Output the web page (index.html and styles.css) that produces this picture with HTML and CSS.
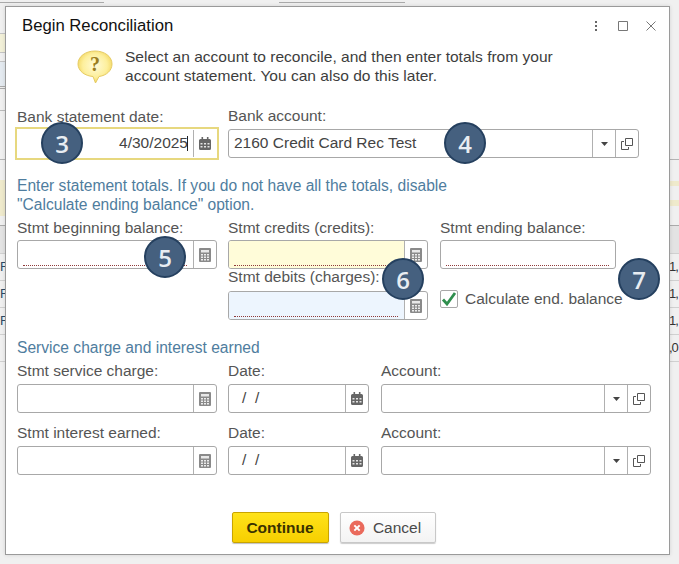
FILE: index.html
```html
<!DOCTYPE html>
<html lang="en">
<head>
<meta charset="utf-8">
<title>Begin Reconciliation</title>
<link rel="stylesheet" href="styles.css">
</head>
<body>
<svg class="sprite" width="0" height="0" aria-hidden="true">
  <symbol id="cal" viewBox="0 0 12 13"><path d="M1.500 2h9A1.500 1.500 0 0 1 12 3.500v8A1.500 1.500 0 0 1 10.500 13h-9A1.500 1.500 0 0 1 0 11.500v-8A1.500 1.500 0 0 1 1.500 2z" fill="#666"/><rect x="2.500" y="0" width="1.600" height="3" fill="#666"/><rect x="7.900" y="0" width="1.600" height="3" fill="#666"/><path d="M1.500 6h2v1.500h-2zM5 6h2v1.500H5zM8.500 6h2v1.500h-2zM1.500 9h2v1.500h-2zM5 9h2v1.500H5zM8.500 9h2v1.500h-2z" fill="#e4e4e4"/></symbol>
  <symbol id="calc" viewBox="0 0 12 14"><rect width="12" height="14" rx="1" fill="#8a8a8a"/><rect x="2" y="2" width="8" height="2.500" fill="#e8e8e8"/><path d="M2 6h2v1.500H2zM5 6h2v1.500H5zM8 6h2v1.500H8zM2 8.500h2V10H2zM5 8.500h2V10H5zM8 8.500h2V10H8zM2 11h2v1.500H2zM5 11h2v1.500H5zM8 11h2v1.500H8z" fill="#ececec"/></symbol>
  <symbol id="copy" viewBox="0 0 12 12"><path d="M4.500.5h7v7h-7z" fill="none" stroke="#555"/><path d="M3 3.500H.5v8h7V9" fill="none" stroke="#555"/></symbol>
  <symbol id="caret" viewBox="0 0 7 4"><path d="M0 0h7L3.500 4z" fill="#444"/></symbol>
</svg>

<div class="backdrop">
  <div class="bg-top"><span class="bg-tl"></span><span class="bg-tr"></span></div>
  <div class="bg-upper"></div>
  <div class="bg-lower"></div>
  <div class="bg-head"></div>
  <div class="bg-row"><span>F</span><span>1,</span></div>
  <div class="bg-row"><span>F</span><span>1,</span></div>
  <div class="bg-row"><span>F</span><span>1,</span></div>
  <div class="bg-row"><span></span><span class="bg-tail">,0</span></div>
</div>

<section class="dialog">
  <header class="head">
    <h1 class="title">Begin Reconciliation</h1>
    <div class="win-tools">
      <svg class="tool tool-dots" width="4" height="10" viewBox="0 0 4 10"><path d="M1 0h2v2H1zM1 4h2v2H1zM1 8h2v2H1z" fill="#666"/></svg>
      <svg class="tool" width="10" height="10" viewBox="0 0 10 10"><path d="M.5.5h9v9h-9z" fill="none" stroke="#777"/></svg>
      <svg class="tool" width="10" height="10" viewBox="0 0 10 10"><path d="M.5.500l9 9M9.500.500l-9 9" fill="none" stroke="#777"/></svg>
    </div>
  </header>

  <div class="intro">
    <svg class="bubble" width="36" height="34" viewBox="0 0 36 34">
      <defs>
        <radialGradient id="bub" cx="50%" cy="45%" r="60%">
          <stop offset="0" stop-color="#fffbd8"/>
          <stop offset=".6" stop-color="#fdef9c"/>
          <stop offset="1" stop-color="#efcf4e"/>
        </radialGradient>
      </defs>
      <path d="M18 1c9.500 0 17 5.500 17 13 0 6.500-5.500 11.500-13 12.500l-3.500 6.500-2.500-6.500C8 26 1 21 1 14 1 6.500 8.500 1 18 1z" fill="url(#bub)" stroke="#e6cb62"/>
      <text x="18" y="21" class="bubble-q">?</text>
    </svg>
    <p class="intro-text">Select an account to reconcile, and then enter totals from your<br>account statement. You can also do this later.</p>
  </div>

  <div class="row-top">
    <div class="col-a">
      <label class="lbl">Bank statement date:</label>
      <div class="field field-focus">
        <div class="input input-date">4/30/2025<i class="caret-bar"></i></div>
        <div class="cell"><svg class="ico-cal"><use href="#cal"/></svg></div>
      </div>
    </div>
    <div class="col-bank">
      <label class="lbl lbl-up">Bank account:</label>
      <div class="field">
        <div class="input input-text">2160 Credit Card Rec Test</div>
        <div class="cell"><svg class="ico-caret"><use href="#caret"/></svg></div>
        <div class="cell"><svg class="ico-copy"><use href="#copy"/></svg></div>
      </div>
    </div>
  </div>

  <p class="section-note">Enter statement totals. If you do not have all the totals, disable<br>"Calculate ending balance" option.</p>

  <div class="row-totals">
    <div class="col-a">
      <label class="lbl">Stmt beginning balance:</label>
      <div class="field">
        <div class="input input-dotted"></div>
        <div class="cell"><svg class="ico-calc"><use href="#calc"/></svg></div>
      </div>
    </div>
    <div class="col-a">
      <label class="lbl">Stmt credits (credits):</label>
      <div class="field">
        <div class="input input-dotted tint-y"></div>
        <div class="cell"><svg class="ico-calc"><use href="#calc"/></svg></div>
      </div>
      <label class="lbl lbl-wide">Stmt debits (charges):</label>
      <div class="field">
        <div class="input input-dotted tint-b"></div>
        <div class="cell"><svg class="ico-calc"><use href="#calc"/></svg></div>
      </div>
    </div>
    <div class="col-end">
      <label class="lbl">Stmt ending balance:</label>
      <div class="field">
        <div class="input input-dotted"></div>
      </div>
      <div class="check-row">
        <span class="check"><svg width="16" height="14" viewBox="0 0 16 14"><path d="M2 7.500l4 4.500 8-11" fill="none" stroke="#2f8f4e" stroke-width="2.800"/></svg></span>
        <span class="check-label">Calculate end. balance</span>
      </div>
    </div>
  </div>

  <h2 class="section-head">Service charge and interest earned</h2>

  <div class="grid-service">
    <div>
      <label class="lbl">Stmt service charge:</label>
      <div class="field">
        <div class="input"></div>
        <div class="cell"><svg class="ico-calc"><use href="#calc"/></svg></div>
      </div>
    </div>
    <div>
      <label class="lbl">Date:</label>
      <div class="field">
        <div class="input input-slashes">/&nbsp;&nbsp;/</div>
        <div class="cell"><svg class="ico-cal"><use href="#cal"/></svg></div>
      </div>
    </div>
    <div>
      <label class="lbl">Account:</label>
      <div class="field">
        <div class="input"></div>
        <div class="cell"><svg class="ico-caret"><use href="#caret"/></svg></div>
        <div class="cell"><svg class="ico-copy"><use href="#copy"/></svg></div>
      </div>
    </div>
    <div>
      <label class="lbl">Stmt interest earned:</label>
      <div class="field">
        <div class="input"></div>
        <div class="cell"><svg class="ico-calc"><use href="#calc"/></svg></div>
      </div>
    </div>
    <div>
      <label class="lbl">Date:</label>
      <div class="field">
        <div class="input input-slashes">/&nbsp;&nbsp;/</div>
        <div class="cell"><svg class="ico-cal"><use href="#cal"/></svg></div>
      </div>
    </div>
    <div>
      <label class="lbl">Account:</label>
      <div class="field">
        <div class="input"></div>
        <div class="cell"><svg class="ico-caret"><use href="#caret"/></svg></div>
        <div class="cell"><svg class="ico-copy"><use href="#copy"/></svg></div>
      </div>
    </div>
  </div>

  <div class="actions">
    <button class="btn btn-primary" type="button">Continue</button>
    <button class="btn btn-cancel" type="button">
      <svg width="16" height="16" viewBox="0 0 18 18"><circle cx="9" cy="9" r="8.500" fill="#ea6a5c"/><path d="M6 6l6 6M12 6l-6 6" stroke="#fff" stroke-width="2.200"/></svg>
      Cancel
    </button>
  </div>
</section>

<span class="badge badge-3">3</span>
<span class="badge badge-4">4</span>
<span class="badge badge-5">5</span>
<span class="badge badge-6">6</span>
<span class="badge badge-7">7</span>
</body>
</html>
```

FILE: styles.css
```css
* { box-sizing: border-box; }
html, body { margin: 0; height: 100%; }
body {
  position: relative;
  width: 679px;
  height: 564px;
  overflow: hidden;
  background: #f0f0f0;
  font-family: "Liberation Sans", Arial, sans-serif;
  color: #4a4a4a;
}
.sprite { position: absolute; }

/* Page behind the modal */
.backdrop { display: flex; flex-direction: column; height: 564px; }
.bg-top { display: flex; height: 33px; padding-top: 2px; }
.bg-tl { width: 104px; height: 1px; background: #aaa; }
.bg-tr { width: 126px; height: 1px; margin-left: 175px; background: #aaa; }
.bg-upper {
  width: 6px;
  height: 126px;
  background:
    linear-gradient(#c4c4c4 0 1px, #f2f0d8 1px 19px, #c4c4c4 19px 20px, #f0f0f0 20px 28px, #c4c4c4 28px 29px,
      #e4eaf0 29px 53px, #aaa 53px 54px, #f0f0f0 54px 55px, #aaa 55px 56px, #f0f0f0 56px 77px, #bbb 77px 78px, #f0f0f0 78px);
}
.bg-lower {
  height: 66px;
  border-top: 1px solid #b4b4b4;
  background:
    linear-gradient(#f0f0f0 0 20px, #efeacc 20px 56px, #f0f0f0 56px) left / 6px 100% no-repeat,
    linear-gradient(#f0f0f0 0 21px, #efeacc 21px 26px, #f0f0f0 26px 40px, #efeacc 40px 46px, #f0f0f0 46px) right / 10px 100% no-repeat;
}
.bg-head { height: 28px; background: #e3e3e3; border-top: 1px solid #aaa; }
.bg-row {
  display: flex;
  justify-content: space-between;
  height: 27px;
  padding-top: 5px;
  border-top: 1px solid #d0d0d0;
  font-size: 13px;
  line-height: 16px;
  color: #333;
}
.bg-row:last-child { height: 28px; border-bottom: 1px solid #d0d0d0; }
.bg-row span:first-child { color: #2c4a66; }
.bg-row span:last-child { width: 10px; letter-spacing: -1px; white-space: nowrap; }
.bg-row .bg-tail { letter-spacing: 0; width: 7px; }

/* Modal */
.dialog {
  position: absolute;
  left: 5px;
  top: 6px;
  width: 665px;
  height: 549px;
  padding: 0 11px;
  background: #fff;
  border: 1px solid #9a9a9a;
  box-shadow: 0 0 4px rgba(0, 0, 0, .12);
}
.head { display: flex; align-items: center; justify-content: space-between; height: 38px; padding: 0 2px 0 5px; }
.title { margin: 0; font-size: 16.700px; font-weight: 400; color: #111; }
.win-tools { display: flex; align-items: center; gap: 18px; }
.tool { display: block; }
.tool-dots { margin-right: 2px; }

.intro { display: flex; height: 38px; margin-top: 2px; padding-left: 60px; }
.bubble { flex: none; margin: 3px 12px 0 0; }
.bubble-q { font: 700 20px "Liberation Serif", serif; fill: #9a7d20; text-anchor: middle; }
.intro-text { margin: 0; font-size: 15.550px; line-height: 19px; color: #3d3d3d; white-space: nowrap; }

.row-top { display: flex; gap: 11px; margin-top: 24px; }
.col-a { width: 200px; flex: none; }
.col-bank { width: 411px; flex: none; }
.col-end { width: 176px; flex: none; margin-left: 1px; }

.lbl { display: block; height: 16px; margin-bottom: 4px; font-size: 15.500px; line-height: 16px; white-space: nowrap; color: #555; }
.lbl-wide { margin-bottom: 6px; }
.lbl-up { transform: translateY(-1px); }

.field {
  display: flex;
  height: 29px;
  border: 1px solid #a8a8a8;
  border-radius: 3px;
  background: #fff;
  overflow: hidden;
}
.field-focus { border-radius: 0; border-color: #fff; outline: 2px solid #e7d87f; }
.input {
  position: relative;
  flex: 1;
  min-width: 0;
  font-size: 15.500px;
  line-height: 26px;
  color: #444;
}
.input-text { padding-left: 5px; }
.input-date { padding-right: 5px; text-align: right; }
.caret-bar { display: inline-block; width: 1px; height: 15px; margin-left: -1px; background: #222; vertical-align: -3px; }
.input-slashes { padding-left: 13px; }
.input-dotted::after {
  content: "";
  position: absolute;
  left: 5px;
  right: 6px;
  bottom: 2px;
  border-bottom: 1px dotted #8f3a3a;
}
.tint-y { background: #fffcd9; }
.tint-b { background: #edf5fe; }
.cell {
  display: flex;
  align-items: center;
  justify-content: center;
  flex: none;
  width: 23px;
  border-left: 1px solid #b0b0b0;
}
.ico-cal { width: 12px; height: 13px; }
.ico-calc { width: 12px; height: 14px; }
.ico-copy { width: 12px; height: 12px; }
.ico-caret { width: 7px; height: 4px; }

.section-note { margin: 18px 0 0; font-size: 15.600px; line-height: 19px; color: #4f7d9e; white-space: nowrap; }
.row-totals { display: flex; gap: 11px; margin-top: 6px; }
.check-row { display: flex; align-items: center; gap: 7px; margin-top: 21px; }
.check {
  display: flex;
  align-items: center;
  justify-content: center;
  flex: none;
  width: 18px;
  height: 18px;
  border: 1px solid #a8a8a8;
  border-radius: 2px;
}
.check-label { font-size: 15.500px; line-height: 18px; white-space: nowrap; color: #555; }

.section-head { margin: 18px 0 0; font-size: 15.600px; font-weight: 400; line-height: 19px; color: #4f7d9e; }
.grid-service {
  display: grid;
  grid-template-columns: 211px 153px 270px;
  row-gap: 12px;
  margin-top: 6px;
}
.grid-service > div:nth-child(3n + 1) { padding-right: 11px; }
.grid-service > div:nth-child(3n + 2) { padding-right: 12px; }
.grid-service .lbl { margin-bottom: 5px; }

.actions { display: flex; justify-content: center; gap: 11px; margin-top: 37px; padding-right: 8px; }
.btn {
  display: flex;
  align-items: center;
  justify-content: center;
  height: 31px;
  padding: 0;
  border-radius: 2px;
  font-family: "Liberation Sans", Arial, sans-serif;
  font-size: 15.500px;
}
.btn-primary {
  width: 97px;
  border: 1px solid #c9a400;
  background: linear-gradient(#ffe31a, #f7cf00);
  box-shadow: 0 1px 1px rgba(0, 0, 0, .25);
  font-weight: 700;
  color: #3a3200;
}
.btn-cancel {
  width: 96px;
  gap: 8px;
  padding-right: 5px;
  border: 1px solid #c8c8c8;
  background: linear-gradient(#fff, #f3f3f3);
  box-shadow: 0 1px 1px rgba(0, 0, 0, .2);
  color: #4a4a4a;
}

/* Callout number badges */
.badge {
  position: absolute;
  display: flex;
  align-items: center;
  justify-content: center;
  width: 42px;
  height: 42px;
  border: 2px solid #25405f;
  border-radius: 50%;
  background: #45607f;
  font-family: "Open Sans", sans-serif;
  font-size: 24px;
  font-weight: 600;
  color: #e8edf2;
}
.badge-3 { left: 41px; top: 122px; }
.badge-4 { left: 444px; top: 122px; }
.badge-5 { left: 144px; top: 236px; }
.badge-6 { left: 382px; top: 258px; }
.badge-7 { left: 618px; top: 258px; }
```
